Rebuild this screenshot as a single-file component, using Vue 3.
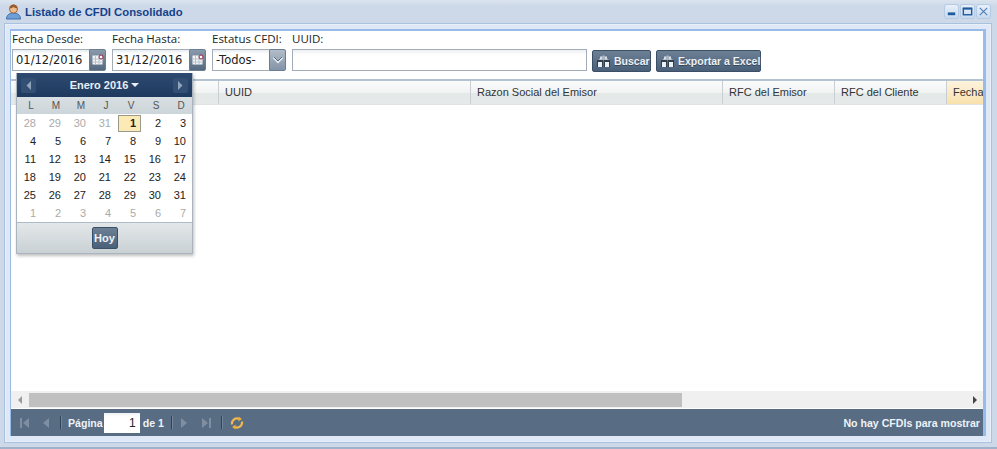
<script setup>
const columns = [
  { label: 'UUID', width: 252 },
  { label: 'Razon Social del Emisor', width: 252 },
  { label: 'RFC del Emisor', width: 112 },
  { label: 'RFC del Cliente', width: 112 }
]
const dow = ['L', 'M', 'M', 'J', 'V', 'S', 'D']
const weeks = [
  [[28, 1], [29, 1], [30, 1], [31, 1], [1, 2], [2, 0], [3, 0]],
  [[4, 0], [5, 0], [6, 0], [7, 0], [8, 0], [9, 0], [10, 0]],
  [[11, 0], [12, 0], [13, 0], [14, 0], [15, 0], [16, 0], [17, 0]],
  [[18, 0], [19, 0], [20, 0], [21, 0], [22, 0], [23, 0], [24, 0]],
  [[25, 0], [26, 0], [27, 0], [28, 0], [29, 0], [30, 0], [31, 0]],
  [[1, 1], [2, 1], [3, 1], [4, 1], [5, 1], [6, 1], [7, 1]]
]
const dayClass = (k) => ({ 1: 'muted', 2: 'today' }[k] || '')
</script>

<template>
  <div class="win">
    <header class="title">
      <svg class="usr" width="17" height="17" viewBox="0 0 17 17">
        <path d="M1.500 16c0-4 3-6 7-6s7 2 7 6z" fill="#6f9fd8" stroke="#3d6ea8" />
        <circle cx="8.500" cy="6" r="4" fill="#eebd8f" stroke="#a8683a" />
        <path d="M4.500 5.500c.5-3 2-4 4-4s3.500 1 4 4c-2 0-3-1-4-1.500-1 .5-2 1.500-4 1.500z" fill="#9b5a2c" />
      </svg>
      <span class="ttext">Listado de CFDI Consolidado</span>
      <div class="tools">
        <span class="tool"><svg width="13" height="13" viewBox="0 0 14 14"><rect x="3" y="8" width="8" height="3" fill="#1f5a9c" /></svg></span>
        <span class="tool"><svg width="13" height="13" viewBox="0 0 14 14"><rect x="2.500" y="3.500" width="9" height="7" fill="none" stroke="#1f5a9c" stroke-width="1.500" /><rect x="2" y="3" width="10" height="2" fill="#1f5a9c" /></svg></span>
        <span class="tool"><svg width="13" height="13" viewBox="0 0 14 14"><path d="M3 3l8 8M11 3l-8 8" stroke="#4f7cb3" stroke-width="1.200" /></svg></span>
      </div>
    </header>

    <div class="shell">
      <div class="frame">
        <section class="filters">
          <div class="field">
            <label>Fecha Desde:</label>
            <div class="date">
              <span class="val">01/12/2016</span>
              <span class="trig"><svg width="14" height="14" viewBox="0 0 14 14"><rect x="1.500" y="2.500" width="10" height="9" fill="#f1f3f6" /><path d="M1.500 6h10M1.500 9h10M4.500 3v8.500M8 3v8.500" stroke="#b9c2cc" /><circle cx="10" cy="4" r="2" fill="#fff" stroke="#8f2040" /></svg></span>
            </div>
          </div>
          <div class="field">
            <label>Fecha Hasta:</label>
            <div class="date">
              <span class="val">31/12/2016</span>
              <span class="trig"><svg width="14" height="14" viewBox="0 0 14 14"><rect x="1.500" y="2.500" width="10" height="9" fill="#f1f3f6" /><path d="M1.500 6h10M1.500 9h10M4.500 3v8.500M8 3v8.500" stroke="#b9c2cc" /><circle cx="10" cy="4" r="2" fill="#fff" stroke="#8f2040" /></svg></span>
            </div>
          </div>
          <div class="field">
            <label>Estatus CFDI:</label>
            <div class="date sel">
              <span class="val">-Todos-</span>
              <span class="trig light"><svg width="12" height="10" viewBox="0 0 12 10"><path d="M1.500 2.500L6 7l4.500-4.500" fill="none" stroke="#e6ebf0" stroke-width="2" /><path d="M2 2L6 6l4-4" fill="none" stroke="#52677c" /></svg></span>
            </div>
          </div>
          <div class="field uuid">
            <label>UUID:</label>
            <div class="search"></div>
          </div>
          <button class="btn b1"><svg class="bino" width="15" height="13" viewBox="0 0 15 13"><path d="M7.500 0L13 5H2z" fill="#a9b4bf" /><path d="M4 1.500h2v3H4zM9 1.500h2v3H9z" fill="#d5dbe1" /><rect x="1" y="5" width="6" height="7" fill="#2f3e4d" /><rect x="8" y="5" width="6" height="7" fill="#2f3e4d" /><rect x="2" y="7" width="4" height="5" fill="#eef1f3" /><rect x="9" y="7" width="4" height="5" fill="#eef1f3" /></svg>Buscar</button>
          <button class="btn b2"><svg class="bino" width="15" height="13" viewBox="0 0 15 13"><path d="M7.500 0L13 5H2z" fill="#a9b4bf" /><path d="M4 1.500h2v3H4zM9 1.500h2v3H9z" fill="#d5dbe1" /><rect x="1" y="5" width="6" height="7" fill="#2f3e4d" /><rect x="8" y="5" width="6" height="7" fill="#2f3e4d" /><rect x="2" y="7" width="4" height="5" fill="#eef1f3" /><rect x="9" y="7" width="4" height="5" fill="#eef1f3" /></svg>Exportar a Excel</button>
        </section>

        <div class="grid">
          <div class="head">
            <div class="hspace"></div>
            <div v-for="c in columns" :key="c.label" class="hc" :style="{ width: c.width + 'px' }">{{ c.label }}</div>
            <div class="hc sorted">Fecha</div>
          </div>
          <div class="body"></div>
          <div class="scroll">
            <span class="arr a1"><svg width="6" height="8" viewBox="0 0 6 8"><path d="M5 0v8L1 4z" fill="#9a9a9a" /></svg></span>
            <div class="track"><div class="thumb"></div></div>
            <span class="arr"><svg width="6" height="8" viewBox="0 0 6 8"><path d="M1 0v8l4-4z" fill="#444" /></svg></span>
          </div>
          <footer class="pager">
            <svg class="pi first" width="12" height="12" viewBox="0 0 12 12"><path d="M2 1h2v10H2zM11 1v10L5 6z" fill="#7f8ea0" /></svg>
            <svg class="pi prev" width="10" height="12" viewBox="0 0 10 12"><path d="M8 1v10L2 6z" fill="#7f8ea0" /></svg>
            <span class="sep"></span>
            <span class="ptext">Página</span>
            <span class="pinput">1</span>
            <span class="ptext">de 1</span>
            <span class="sep s2"></span>
            <svg class="pi next" width="10" height="12" viewBox="0 0 10 12"><path d="M2 1v10l6-5z" fill="#7f8ea0" /></svg>
            <svg class="pi last" width="12" height="12" viewBox="0 0 12 12"><path d="M1 1v10l6-5zM8 1h2v10H8z" fill="#7f8ea0" /></svg>
            <span class="sep s3"></span>
            <svg class="refresh" width="16" height="16" viewBox="0 0 16 16"><path d="M3 9.500a5 5 0 0 1 7-5.500" fill="none" stroke="#eeb84e" stroke-width="2.200" /><path d="M13 6.500a5 5 0 0 1-7 5.500" fill="none" stroke="#eeb84e" stroke-width="2.200" /><path d="M9.500 1.500l3.500 2.500-3.500 2.500zM6.500 9.500v5L3 12z" fill="#e9ae3c" /></svg>
            <span class="status">No hay CFDIs para mostrar</span>
          </footer>
        </div>
      </div>
    </div>

    <div class="cal">
      <div class="calhead">
        <span class="nav"><svg width="6" height="9" viewBox="0 0 6 9"><path d="M5 0v9L0.500 4.500z" fill="#8fa3bb" /></svg></span>
        <span class="month">Enero 2016<i class="caret"></i></span>
        <span class="nav"><svg width="6" height="9" viewBox="0 0 6 9"><path d="M1 0v9l4.500-4.500z" fill="#8fa3bb" /></svg></span>
      </div>
      <div class="dow"><span v-for="(d, i) in dow" :key="i">{{ d }}</span></div>
      <div class="days">
        <template v-for="(w, wi) in weeks" :key="wi">
          <span v-for="(d, di) in w" :key="di" class="day" :class="dayClass(d[1])">{{ d[0] }}</span>
        </template>
      </div>
      <div class="calfoot"><button class="hoy">Hoy</button></div>
    </div>
  </div>
</template>

<style>
html, body { margin: 0; background: #ccd9e8; overflow: hidden; }
</style>

<style scoped>
.win { position: relative; width: 997px; height: 449px; box-sizing: border-box; padding: 0 5px 0 4px; background: linear-gradient(#dbe4ef, #cdd9e9 6px); font-family: "Liberation Sans", Arial, sans-serif; border-bottom: 2px solid #9fb2c9; overflow: hidden; }
.title { height: 23px; display: flex; align-items: center; margin-left: 1px; }
.usr { margin-right: 3px; }
.ttext { font-size: 11.3px; font-weight: 700; color: #15428b; }
.tools { margin-left: auto; display: flex; gap: 1px; margin-right: 1px; }
.tool { width: 15px; height: 15px; box-sizing: border-box; display: flex; align-items: center; justify-content: center; border: 1px solid #b5cbe4; border-radius: 3px; background: linear-gradient(#e8f0fa, #c9d9ee); overflow: hidden; }
.shell { height: 420px; box-sizing: border-box; border: 1px solid #a9c2e0; background: #dfe8f6; padding: 5px 5px 6px 5px; box-shadow: inset 0 0 0 1px #e8eff9; }
.frame { height: 100%; box-sizing: border-box; border: 2px solid #99bbe8; border-width: 2px 3px 0 1px; background: #fff; display: flex; flex-direction: column; }
.filters { height: 50px; box-sizing: border-box; flex: none; display: flex; align-items: flex-start; padding-top: 1px; padding-left: 1px; border-bottom: 2px solid #b4c3d1; }
.field { display: flex; flex-direction: column; margin-right: 6px; }
.field label { font-family: "Open Sans", "Liberation Sans", sans-serif; font-size: 11.5px; line-height: 13px; color: #222; height: 16px; margin-bottom: 1px; white-space: nowrap; }
.date { display: flex; width: 94px; height: 22px; }
.sel { width: 74px; }
.val { flex: 1; box-sizing: border-box; border: 1px solid #a3adb8; border-right: 0; padding-left: 3px; font-family: "DejaVu Sans", sans-serif; font-size: 11.5px; line-height: 21px; color: #222; white-space: nowrap; overflow: hidden; background: linear-gradient(#e9edf1, #fff 4px); }
.trig { width: 17px; flex: none; display: flex; align-items: center; justify-content: center; background: linear-gradient(#8a9aac, #54697f); border: 1px solid #6b7e92; box-sizing: border-box; border-radius: 0 2px 2px 0; }
.trig.light { background: linear-gradient(#b2bdc8, #8294a7); }
.uuid { margin-right: 5px; }
.search { width: 295px; height: 22px; box-sizing: border-box; border: 1px solid #a3adb8; background: linear-gradient(#eceff2, #fff 5px); }
.btn { margin-top: 18px; height: 22px; box-sizing: border-box; padding: 0 0 0 3px; display: flex; align-items: center; border: 1px solid #3b5066; border-radius: 2px; background: linear-gradient(#6c8095, #4a6079); color: #edf1f5; font-family: "Liberation Sans", Arial, sans-serif; font-size: 10.5px; font-weight: 700; white-space: nowrap; text-shadow: 0 1px 0 #33475a; }
.b1 { width: 59px; margin-right: 5px; }
.b2 { width: 105px; }
.bino { margin-right: 3px; flex: none; }
.grid { flex: 1; min-height: 0; display: flex; flex-direction: column; }
.head { height: 24px; flex: none; display: flex; overflow: hidden; background: linear-gradient(#fbfbfb, #f1f3f3 50%, #e3e9e7 50%, #e6eaea); border-bottom: 1px solid #dfe3e5; box-sizing: border-box; }
.hspace { width: 208px; flex: none; border-right: 1px solid #c9ced2; box-sizing: border-box; }
.hc { box-sizing: border-box; flex: none; font-size: 11px; line-height: 22px; padding-left: 6px; color: #333; border-right: 1px solid #c9ced2; white-space: nowrap; }
.sorted { width: 60px; background: linear-gradient(#fdf3df, #f9e1ad); border-right: 0; }
.body { flex: 1; background: #fff; }
.scroll { height: 17px; flex: none; display: flex; align-items: center; background: #f0f0f0; }
.arr { width: 17px; flex: none; display: flex; align-items: center; justify-content: center; }
.a1 { width: 18px; }
.track { flex: 1; height: 14px; }
.thumb { width: 653px; height: 14px; background: #c0c0c0; }
.pager { height: 27px; flex: none; margin-top: 1px; display: flex; align-items: center; background: #586c84; font-size: 10.6px; font-weight: 700; color: #eef2f6; padding-left: 7px; box-sizing: border-box; position: relative; }
.pi { flex: none; }
.prev { margin-left: 11px; }
.sep { width: 2px; height: 13px; box-sizing: border-box; background: #2f4257; margin-left: 9px; margin-right: 6px; border-right: 1px solid #73859a; flex: none; }
.s2 { margin-left: 7px; margin-right: 6px; }
.s3 { margin-left: 8px; margin-right: 6px; }
.next { margin-left: 0; }
.last { margin-left: 12px; }
.pinput { width: 36px; height: 20px; margin: 0 3px 0 1px; box-sizing: border-box; background: linear-gradient(#eef1f4, #fff 4px); color: #222; text-align: right; line-height: 21px; padding-right: 4px; font-size: 12px; font-weight: 400; }
.refresh { flex: none; }
.status { margin-left: auto; margin-right: 3px; }
.cal { position: absolute; left: 16px; top: 73px; width: 177px; height: 181px; box-sizing: border-box; background: #fff; border: 1px solid #a9b4bf; border-top: 0; box-shadow: 1px 2px 3px rgba(0, 0, 0, .25); display: flex; flex-direction: column; z-index: 2; }
.calhead { height: 24px; flex: none; display: flex; align-items: center; justify-content: space-between; padding: 0 4px; background: linear-gradient(#2e4a70, #1f3a5f); }
.nav { width: 15px; height: 15px; display: flex; align-items: center; justify-content: center; background: #344f74; border-radius: 2px; }
.month { font-size: 11px; font-weight: 700; color: #e8eef5; }
.caret { display: inline-block; width: 0; height: 0; margin-left: 3px; vertical-align: 2px; border: 4px solid transparent; border-top: 4px solid #e8eef5; border-bottom: 0; }
.dow { height: 17px; flex: none; display: grid; grid-template-columns: repeat(7, 25px); background: linear-gradient(#d9dfe2, #ccd5da); font-size: 10px; color: #555; line-height: 17px; text-align: center; }
.dow span { padding-left: 3px; }
.days { height: 108px; flex: none; display: grid; grid-template-columns: repeat(7, 25px); grid-auto-rows: 18px; font-size: 11px; color: #222; text-align: right; }
.day { line-height: 18px; padding-right: 6px; }
.muted { color: #aaa; }
.today { font-weight: 700; background: #fbeab6; border: 1px solid #9a9a8a; box-sizing: border-box; line-height: 15px; height: 17px; margin: 1px 1px 0; padding-right: 4px; }
.calfoot { flex: 1; border-top: 1px solid #aebcc8; background: linear-gradient(#e3e7e9, #c9d1d4); display: flex; align-items: center; justify-content: center; }
.hoy { width: 26px; height: 22px; padding: 0; border: 1px solid #3b5066; border-radius: 2px; background: linear-gradient(#6c8095, #4a6079); color: #eef2f6; font-family: "Liberation Sans", Arial, sans-serif; font-size: 11px; font-weight: 700; }
</style>
